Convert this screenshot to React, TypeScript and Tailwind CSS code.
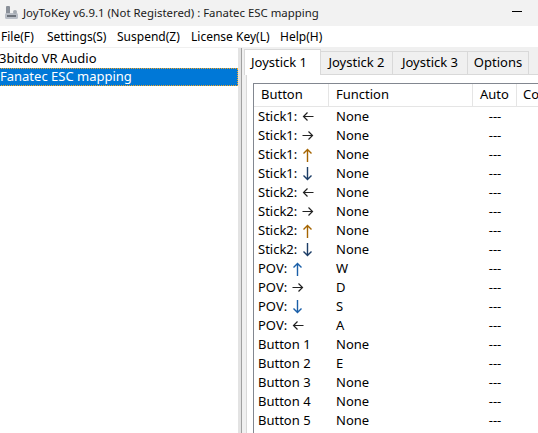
import React from 'react';

type Dir = 'left' | 'right' | 'up' | 'down';
type Row = { label: string; arrow?: Dir; arrowColor?: string; func: string };

const rows: Row[] = [
  { label: 'Stick1:', arrow: 'left', func: 'None' },
  { label: 'Stick1:', arrow: 'right', func: 'None' },
  { label: 'Stick1:', arrow: 'up', arrowColor: '#a56400', func: 'None' },
  { label: 'Stick1:', arrow: 'down', arrowColor: '#1c3d66', func: 'None' },
  { label: 'Stick2:', arrow: 'left', func: 'None' },
  { label: 'Stick2:', arrow: 'right', func: 'None' },
  { label: 'Stick2:', arrow: 'up', arrowColor: '#a56400', func: 'None' },
  { label: 'Stick2:', arrow: 'down', arrowColor: '#1c3d66', func: 'None' },
  { label: 'POV:', arrow: 'up', arrowColor: '#1a5fa8', func: 'W' },
  { label: 'POV:', arrow: 'right', func: 'D' },
  { label: 'POV:', arrow: 'down', arrowColor: '#1a5fa8', func: 'S' },
  { label: 'POV:', arrow: 'left', func: 'A' },
  { label: 'Button 1', func: 'None' },
  { label: 'Button 2', func: 'E' },
  { label: 'Button 3', func: 'None' },
  { label: 'Button 4', func: 'None' },
  { label: 'Button 5', func: 'None' },
];

const menus = [
  { name: 'File(F)', w: 'w-[46px]' },
  { name: 'Settings(S)', w: 'w-[70px]' },
  { name: 'Suspend(Z)', w: 'w-[74px]' },
  { name: 'License Key(L)', w: 'w-[89px]' },
  { name: 'Help(H)', w: 'w-[60px]' },
];

function AppIcon() {
  return (
    <svg width="16" height="16" viewBox="0 0 16 16" className="shrink-0">
      <rect x="2" y="1" width="4" height="9" rx="1" fill="#8a9099" />
      <rect x="1" y="8" width="13" height="6" rx="1.5" fill="#b9bec6" />
      <rect x="3" y="10" width="9" height="2" fill="#6c727a" />
      <circle cx="11" cy="7" r="2" fill="#a4aab2" />
    </svg>
  );
}

function Arrow({ dir, color = '#222' }: { dir: Dir; color?: string }) {
  if (dir === 'left' || dir === 'right') {
    const d =
      dir === 'left'
        ? 'M11.5 6.5 H1.5 M5.5 2.5 L1.5 6.5 L5.5 10.5'
        : 'M0.5 6.5 H10.5 M6.5 2.5 L10.5 6.5 L6.5 10.5';
    return (
      <svg width="12" height="13" viewBox="0 0 12 13" className="ml-[5px] shrink-0">
        <path d={d} stroke={color} strokeWidth="1.2" fill="none" />
      </svg>
    );
  }
  const d =
    dir === 'up'
      ? 'M5.5 14 V1.5 M1.5 5.5 L5.5 1.5 L9.5 5.5'
      : 'M5.5 0 V12.5 M1.5 8.5 L5.5 12.5 L9.5 8.5';
  return (
    <svg width="11" height="14" viewBox="0 0 11 14" className="ml-[5px] shrink-0">
      <path d={d} stroke={color} strokeWidth="1.4" fill="none" />
    </svg>
  );
}

export default function App() {
  return (
    <div
      className="w-[538px] h-[433px] overflow-hidden bg-[#f0f0f0] text-[12px] text-black flex flex-col"
      style={{ fontFamily: '"Noto Sans", "DejaVu Sans", sans-serif' }}
    >
      {/* Title bar */}
      <div className="h-[26px] shrink-0 bg-[#f2f2f2] flex items-center pl-[4px] relative">
        <AppIcon />
        <span className="ml-[3px] text-[11.4px] text-[#1a1a1a]">
          JoyToKey v6.9.1 (Not Registered) : Fanatec ESC mapping
        </span>
        <div className="absolute right-[16px] top-[11px] w-[10px] h-[1px] bg-black" />
      </div>

      {/* Menu bar */}
      <div className="h-[21px] shrink-0 bg-white flex items-center">
        {menus.map((m) => (
          <div key={m.name} className={`${m.w} shrink-0 pl-[1px] whitespace-nowrap`}>
            {m.name}
          </div>
        ))}
      </div>

      <div className="flex flex-1 min-h-0 border-t border-[#f0f0f0]">
        {/* Profile list */}
        <div className="w-[238px] shrink-0 bg-white pt-[2px] text-[13px]">
          <div className="h-[18px] flex items-center -ml-[1px] whitespace-nowrap">3bitdo VR Audio</div>
          <div className="h-[18px] flex items-center bg-[#0078d7] text-white border border-dotted border-[#f5a623] -ml-[1px] whitespace-nowrap">
            Fanatec ESC mapping
          </div>
        </div>

        {/* Splitter */}
        <div className="w-[8px] shrink-0 flex">
          <div className="w-[3px] bg-[#e3e3e3]" />
          <div className="w-[1px] bg-[#a0a0a0]" />
          <div className="flex-1 bg-[#f0f0f0]" />
        </div>

        {/* Tabs */}
        <div className="flex-1 min-w-0 flex flex-col">
          <div className="h-[26px] shrink-0 flex items-end">
            <div className="w-[77px] h-[26px] -ml-[2px] bg-white border border-b-0 border-[#d9d9d9] flex items-center pl-[6px] relative z-10 -mb-[1px] text-[13px]">
              Joystick 1
            </div>
            <div className="w-[72px] h-[23px] bg-[#f0f0f0] border border-l-0 border-b-0 border-[#d9d9d9] flex items-center justify-center text-[13px]">
              Joystick 2
            </div>
            <div className="w-[75px] h-[23px] bg-[#f0f0f0] border border-l-0 border-b-0 border-[#d9d9d9] flex items-center justify-center text-[13px]">
              Joystick 3
            </div>
            <div className="w-[61px] h-[23px] bg-[#f0f0f0] border border-l-0 border-b-0 border-[#d9d9d9] flex items-center justify-center text-[13px]">
              Options
            </div>
          </div>

          <div className="flex-1 min-h-0 bg-white border-l border-t border-[#d9d9d9] pl-[6px] pt-[8px]">
            <div className="h-full border-l border-t border-[#828790] bg-white overflow-hidden text-[13px]">
              {/* Header */}
              <div className="h-[23px] flex border-b border-[#e5e5e5]">
                <div className="w-[75px] shrink-0 border-r border-[#e5e5e5] flex items-center pl-[7px]">Button</div>
                <div className="w-[144px] shrink-0 border-r border-[#e5e5e5] flex items-center pl-[7px]">Function</div>
                <div className="w-[44px] shrink-0 border-r border-[#e5e5e5] flex items-center pl-[7px]">Auto</div>
                <div className="flex-1 flex items-center pl-[6px] whitespace-nowrap">Co</div>
              </div>
              {/* Rows */}
              {rows.map((r, i) => (
                <div key={i} className="h-[19px] flex items-center">
                  <div className="w-[75px] shrink-0 pl-[4px] whitespace-nowrap flex items-center">
                    <span>{r.label}</span>
                    {r.arrow && <Arrow dir={r.arrow} color={r.arrowColor} />}
                  </div>
                  <div className="w-[144px] shrink-0 pl-[7px]">{r.func}</div>
                  <div className="w-[44px] shrink-0 text-center">---</div>
                </div>
              ))}
            </div>
          </div>
        </div>
      </div>
    </div>
  );
}
